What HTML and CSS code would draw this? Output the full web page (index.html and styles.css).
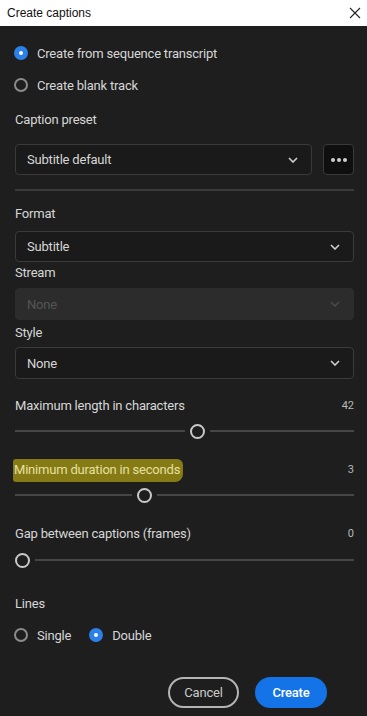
FILE: index.html
```html
<!DOCTYPE html>
<html>
<head>
<meta charset="utf-8">
<link rel="stylesheet" href="styles.css">
</head>
<body>
<div class="titlebar">
  <span class="title">Create captions</span>
  <svg class="close" width="12" height="12" viewBox="0 0 12 12"><path d="M1 1 L11 11 M11 1 L1 11" stroke="#222" stroke-width="1.1" fill="none"/></svg>
</div>
<div class="content">
  <div class="radio-row"><span class="radio on"></span><span>Create from sequence transcript</span></div>
  <div class="radio-row"><span class="radio"></span><span>Create blank track</span></div>

  <div class="label l-preset">Caption preset</div>
  <div class="preset-row">
    <div class="select grow"><span>Subtitle default</span><svg class="chev" width="10" height="6" viewBox="0 0 10 6"><path d="M1 1 L5 5 L9 1" stroke="#cfcfcf" stroke-width="1.6" fill="none"/></svg></div>
    <div class="more"><span class="dot"></span><span class="dot"></span><span class="dot"></span></div>
  </div>
  <div class="divider"></div>

  <div class="label l-format">Format</div>
  <div class="select s-format"><span>Subtitle</span><svg class="chev" width="10" height="6" viewBox="0 0 10 6"><path d="M1 1 L5 5 L9 1" stroke="#cfcfcf" stroke-width="1.6" fill="none"/></svg></div>
  <div class="label l-stream">Stream</div>
  <div class="select disabled s-stream"><span>None</span><svg class="chev" width="10" height="6" viewBox="0 0 10 6"><path d="M1 1 L5 5 L9 1" stroke="#4a4a4a" stroke-width="1.6" fill="none"/></svg></div>
  <div class="label l-style">Style</div>
  <div class="select s-style"><span>None</span><svg class="chev" width="10" height="6" viewBox="0 0 10 6"><path d="M1 1 L5 5 L9 1" stroke="#cfcfcf" stroke-width="1.6" fill="none"/></svg></div>

  <div class="slider-head sh-1"><span>Maximum length in characters</span><span class="val">42</span></div>
  <div class="slider s-1"><div class="track" style="width:50%"></div><span class="thumb"></span><div class="track rest"></div></div>

  <div class="slider-head sh-2"><span class="hl">Minimum duration in seconds</span><span class="val">3</span></div>
  <div class="slider s-2"><div class="track" style="width:34.4%"></div><span class="thumb"></span><div class="track rest"></div></div>

  <div class="slider-head sh-3"><span>Gap between captions (frames)</span><span class="val">0</span></div>
  <div class="slider s-3"><span class="thumb first"></span><div class="track rest"></div></div>

  <div class="label l-lines">Lines</div>
  <div class="lines-row">
    <div class="radio-row inline"><span class="radio"></span><span>Single</span></div>
    <div class="radio-row inline"><span class="radio on"></span><span>Double</span></div>
  </div>

  <div class="buttons">
    <button class="btn cancel">Cancel</button>
    <button class="btn create">Create</button>
  </div>
</div>
</body>
</html>
```
FILE: styles.css
```css
html, body {
  margin: 0;
  padding: 0;
  background: #1e1e1e;
  height: 716px;
  overflow: hidden;
}
body {
  font-family: Roboto, "Liberation Sans", sans-serif;
  color: #d6d6d6;
  font-size: 13px;
}
.titlebar {
  height: 26px;
  background: #ffffff;
  display: flex;
  align-items: center;
  justify-content: space-between;
  padding: 0 6px 0 7px;
}
.title {
  font-family: "Liberation Sans", Arial, sans-serif;
  font-size: 12px;
  color: #111;
}
.content {
  padding: 11px 13px 0 15px;
}
.radio-row {
  height: 32px;
  display: flex;
  align-items: center;
  gap: 9px;
  letter-spacing: -0.2px;
}
.radio {
  width: 14px;
  height: 14px;
  box-sizing: border-box;
  border-radius: 50%;
  border: 2px solid #8c8c8c;
  flex: none;
  margin-left: -1px;
}
.radio.on {
  border: 5px solid #2b80ea;
  background: #ffffff;
}
.label {
  height: 18px;
  line-height: 18px;
  letter-spacing: -0.2px;
}
.l-preset { margin-top: 10px; }
.preset-row {
  margin-top: 15px;
  display: flex;
  gap: 11px;
}
.select {
  height: 31px;
  box-sizing: border-box;
  border: 1px solid #3a3a3a;
  border-radius: 4px;
  background: #1a1a1a;
  display: flex;
  align-items: center;
  justify-content: space-between;
  padding: 0 13px 0 11px;
  letter-spacing: -0.2px;
}
.grow { flex: 1; }
.more {
  width: 31px;
  height: 31px;
  box-sizing: border-box;
  border: 1px solid #3a3a3a;
  border-radius: 4px;
  background: #0f0f0f;
  display: flex;
  align-items: center;
  justify-content: center;
  gap: 2px;
}
.dot {
  width: 4px;
  height: 4px;
  border-radius: 50%;
  background: #cfcfcf;
}
.divider {
  margin-top: 14px;
  height: 2px;
  background: #3a3a3a;
}
.l-format { margin-top: 14px; }
.s-format { margin-top: 8px; }
.l-stream { margin-top: 2px; }
.s-stream { margin-top: 6px; height: 32px; }
.disabled {
  background: #2c2c2c;
  border-color: #2c2c2c;
  color: #555555;
}
.l-style { margin-top: 4px; }
.s-style { margin-top: 5px; height: 32px; }

.slider-head {
  height: 18px;
  line-height: 18px;
  display: flex;
  justify-content: space-between;
  align-items: center;
  letter-spacing: -0.2px;
}
.val {
  font-size: 11px;
  color: #b8b8b8;
  letter-spacing: 0;
}
.sh-1 { margin-top: 18px; }
.sh-2 { margin-top: 20px; }
.sh-3 { margin-top: 20px; }
.hl {
  background: #857a14;
  color: #e6e0a0;
  margin-left: -2px;
  padding: 2px 3px 3px 1px;
  border-radius: 3px 6px 8px 3px;
}
.slider {
  height: 20px;
  display: flex;
  align-items: center;
}
.s-1 { margin-top: 6px; }
.s-2 { margin-top: 6px; }
.s-3 { margin-top: 7px; }
.track {
  height: 2px;
  background: #464646;
  flex: none;
}
.track.rest { flex: 1; }
.thumb {
  width: 15px;
  height: 15px;
  box-sizing: border-box;
  border-radius: 50%;
  border: 2px solid #c8c8c8;
  margin: 0 5px;
  flex: none;
}
.thumb.first { margin-left: 0; }
.l-lines { margin-top: 25px; }
.lines-row {
  margin-top: 6px;
  display: flex;
  gap: 19px;
}
.buttons {
  margin-top: 26px;
  display: flex;
  justify-content: flex-end;
  gap: 16px;
  padding-right: 27px;
}
.btn {
  height: 31px;
  border-radius: 16px;
  font-family: Roboto, "Liberation Sans", sans-serif;
  font-size: 13px;
  letter-spacing: -0.2px;
  cursor: pointer;
}
.cancel {
  width: 71px;
  background: transparent;
  border: 2px solid #b4b4b4;
  color: #cacaca;
}
.create {
  width: 72px;
  background: #1473e6;
  border: none;
  color: #ffffff;
  font-weight: 500;
}
```
